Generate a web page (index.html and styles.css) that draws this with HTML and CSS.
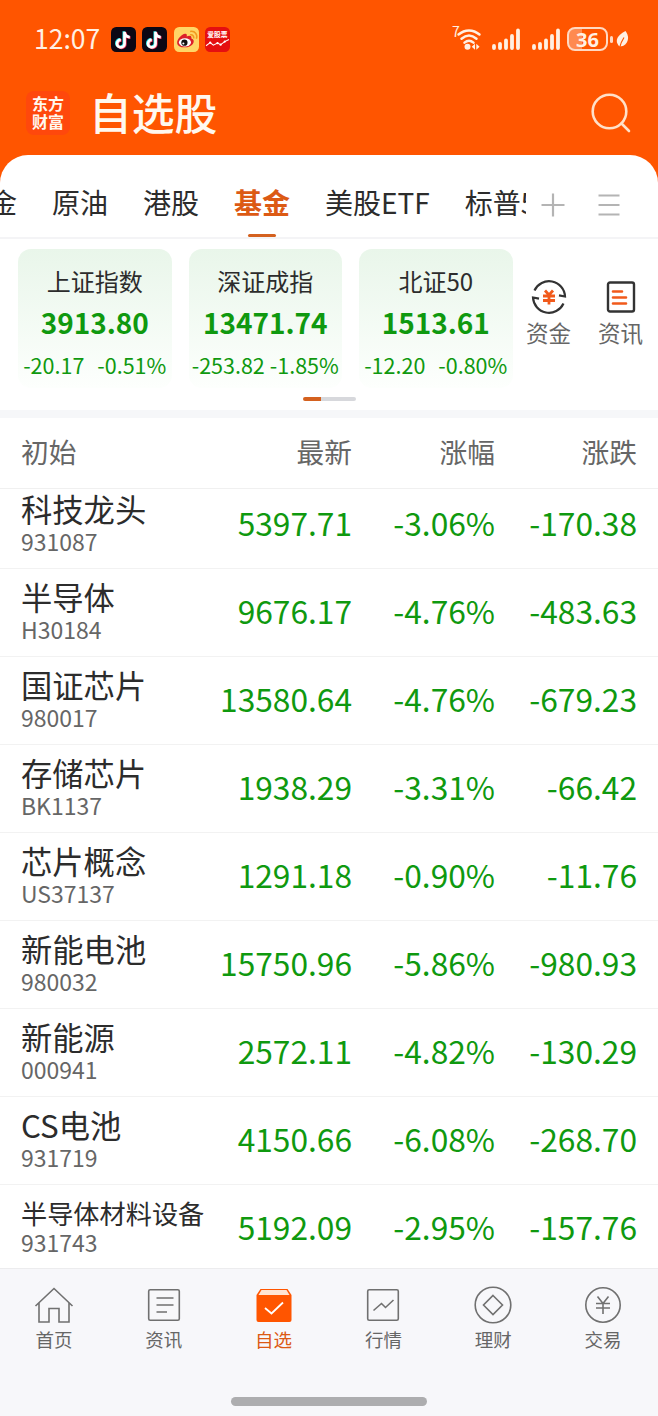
FILE: index.html
```html
<!DOCTYPE html>
<html lang="zh-CN">
<head>
  <meta charset="UTF-8">
  <title>自选股</title>
  <link rel="stylesheet" href="styles.css">
</head>
<body>
  <!-- Status Bar -->
  <div class="status-bar">
    <span class="time">12:07</span>
    <svg class="app-icon" viewBox="0 0 24 24">
      <rect width="24" height="24" rx="5" fill="#0c0714"/>
      <g fill="none" stroke-width="2.6">
        <path d="M12.3 4v11.5a3.6 3.6 0 1 1-3.6-3.6M12.3 5c.5 2.500 2.200 4 5 4.200" stroke="#25e5e8"/>
        <path d="M13.700 5v11.500a3.600 3.600 0 1 1-3.600-3.600M13.700 6c.5 2.500 2.200 4 5 4.200" stroke="#f5325c"/>
        <path d="M13 4.500V16a3.600 3.600 0 1 1-3.600-3.600M13 5.500c.5 2.500 2.200 4 5 4.200" stroke="#fff"/>
      </g>
    </svg>
    <svg class="app-icon" viewBox="0 0 24 24">
      <rect width="24" height="24" rx="5" fill="#0c0714"/>
      <g fill="none" stroke-width="2.6">
        <path d="M12.3 4v11.5a3.6 3.6 0 1 1-3.6-3.6M12.3 5c.5 2.500 2.200 4 5 4.200" stroke="#25e5e8"/>
        <path d="M13.700 5v11.500a3.600 3.600 0 1 1-3.600-3.600M13.700 6c.5 2.500 2.200 4 5 4.200" stroke="#f5325c"/>
        <path d="M13 4.500V16a3.600 3.600 0 1 1-3.600-3.600M13 5.500c.5 2.500 2.200 4 5 4.200" stroke="#fff"/>
      </g>
    </svg>
    <svg class="app-icon" viewBox="0 0 24 24">
      <rect width="24" height="24" rx="5" fill="#ffd667"/>
      <path d="M3 15c0-3.500 5-9 8-8.500 1.500.2 1.500 1.500 1.200 2.500 2.500-1 5-.8 4.500 2 2.300.7 2.600 2.300 2 4-1 3-5 4.500-8.700 4.500S3 18 3 15z" fill="#dc2029"/>
      <ellipse cx="10.500" cy="14.800" rx="5.800" ry="3.900" fill="#fff"/>
      <circle cx="10" cy="15" r="3" fill="#111"/>
      <circle cx="9" cy="15.800" r="1" fill="#fff"/>
      <path d="M15.500 7.500c2.500-.5 4 1.500 3.300 3.500M15.500 4.300c4.500-1 7.500 3 6 7" fill="none" stroke="#f29a1f" stroke-width="1.500"/>
    </svg>
    <svg class="app-icon" viewBox="0 0 24 24">
      <rect width="24" height="24" rx="5" fill="#e50f10"/>
      <text x="12" y="10" class="stock-text">爱股票</text>
      <path d="M1 18l4-3 3 2.500 4-2 3 1.500 4-3 4-2" fill="none" stroke="#fff" stroke-width="1"/>
      <g fill="#fff"><circle cx="5" cy="15" r="1.100"/><circle cx="12" cy="15.500" r="1.100"/><circle cx="15" cy="17" r="1.100"/><circle cx="19" cy="14" r="1.100"/></g>
    </svg>

    <div class="status-right">
      <svg class="wifi" width="32" height="28" viewBox="0 0 32 28">
        <text x="0" y="12" class="wifi-text">7</text>
        <g fill="none" stroke="#fff0e3" stroke-width="2.500" stroke-linecap="round">
          <path d="M6.500 9.500c6.500-5.500 14.500-5.500 21 0M9.500 13.700c5-4.300 10-4.300 15 0M12.500 17.600c3-2.500 6-2.500 9 0"/>
        </g>
        <circle cx="15.500" cy="21.800" r="3" fill="#fff0e3"/>
        <path d="M23 18.700v6l-3.300-3zM24.300 18.700v6l3.300-3z" fill="#fff0e3"/>
      </svg>
      <svg class="signal" width="28" height="22" viewBox="0 0 28 22">
        <path d="M2 20v-2M8 20v-4M14 20v-7.500M20 20V8M26 20V2.500"/>
      </svg>
      <svg class="signal" width="28" height="22" viewBox="0 0 28 22">
        <path d="M2 20v-2M8 20v-4M14 20v-7.500M20 20V8M26 20V2.500"/>
      </svg>
      <span class="battery">36</span>
      <span class="battery-tip"></span>
      <svg class="leaf" width="13" height="19" viewBox="0 0 13 19">
        <path d="M9.500 1C13.500 6 13 13 7 16L3.500 16.500C-1 12-.5 6.500 9.500 1z" fill="#fff0e3"/>
        <path d="M3.500 18C4.500 13.500 6 10.500 8 7.500" fill="none" stroke="#ff5500" stroke-width="1.200"/>
      </svg>
    </div>
  </div>

  <!-- Title -->
  <header>
    <div class="logo">东方<br>财富</div>
    <h1>自选股</h1>
    <svg class="search" width="42" height="42" viewBox="0 0 42 42">
      <circle cx="19.500" cy="19.500" r="16.800"/>
      <path d="M31.500 31.500l7.500 7.500"/>
    </svg>
  </header>

  <main>
    <!-- Group Tabs -->
    <nav class="tabs">
      <div class="tab-list">
        <a>金</a>
        <a>原油</a>
        <a>港股</a>
        <a class="active">基金</a>
        <a>美股ETF</a>
        <a>标普500</a>
      </div>
      <svg class="tab-icon" width="24" height="24" viewBox="0 0 24 24"><path d="M.5 12h23M12 .5v23"/></svg>
      <svg class="tab-icon menu" width="24" height="24" viewBox="0 0 24 24"><path d="M1.500 2.500h21M1.500 12h21M1.500 21.500h21"/></svg>
    </nav>

    <!-- Market Indexes -->
    <section class="indexes">
      <div class="index-card">
        <h3>上证指数</h3>
        <p class="value">3913.80</p>
        <p class="change"><span>-20.17</span><span>-0.51%</span></p>
      </div>
      <div class="index-card">
        <h3>深证成指</h3>
        <p class="value">13471.74</p>
        <p class="change wide"><span>-253.82</span><span>-1.85%</span></p>
      </div>
      <div class="index-card">
        <h3>北证50</h3>
        <p class="value">1513.61</p>
        <p class="change"><span>-12.20</span><span>-0.80%</span></p>
      </div>
      <div class="shortcut">
        <svg width="36" height="36" viewBox="0 0 36 36" fill="none" stroke-width="2.200">
          <path d="M3.500 11.500A16 16 0 0 1 34 17.500l-6-1.200M32.500 24.500A16 16 0 0 1 2 18.500l6 1.200" stroke="#333"/>
          <path d="M14 11.500l4 4.500 4-4.500M12 17h12M12 21.500h12M18 16v9.500" stroke="#f15a1b" stroke-width="2.800"/>
        </svg>
        <span>资金</span>
      </div>
      <div class="shortcut">
        <svg width="36" height="36" viewBox="0 0 36 36" fill="none">
          <rect x="5" y="3.500" width="26" height="29" rx="2" stroke="#333" stroke-width="2.400"/>
          <path d="M10 12.500h9M10 18.500h13M10 24.500h13" stroke="#f15a1b" stroke-width="2.600" stroke-linecap="round"/>
        </svg>
        <span>资讯</span>
      </div>
    </section>
    <div class="pager"><span></span></div>

    <!-- Watch List -->
    <div class="list-header">
      <span>初始</span><span>最新</span><span>涨幅</span><span>涨跌</span>
    </div>
    <section class="stock-list">
      <div class="stock">
        <div class="name"><h2>科技龙头</h2><p>931087</p></div>
        <span>5397.71</span><span>-3.06%</span><span>-170.38</span>
      </div>
      <div class="stock">
        <div class="name"><h2>半导体</h2><p>H30184</p></div>
        <span>9676.17</span><span>-4.76%</span><span>-483.63</span>
      </div>
      <div class="stock">
        <div class="name"><h2>国证芯片</h2><p>980017</p></div>
        <span>13580.64</span><span>-4.76%</span><span>-679.23</span>
      </div>
      <div class="stock">
        <div class="name"><h2>存储芯片</h2><p>BK1137</p></div>
        <span>1938.29</span><span>-3.31%</span><span>-66.42</span>
      </div>
      <div class="stock">
        <div class="name"><h2>芯片概念</h2><p>US37137</p></div>
        <span>1291.18</span><span>-0.90%</span><span>-11.76</span>
      </div>
      <div class="stock">
        <div class="name"><h2>新能电池</h2><p>980032</p></div>
        <span>15750.96</span><span>-5.86%</span><span>-980.93</span>
      </div>
      <div class="stock">
        <div class="name"><h2>新能源</h2><p>000941</p></div>
        <span>2572.11</span><span>-4.82%</span><span>-130.29</span>
      </div>
      <div class="stock">
        <div class="name"><h2>CS电池</h2><p>931719</p></div>
        <span>4150.66</span><span>-6.08%</span><span>-268.70</span>
      </div>
      <div class="stock">
        <div class="name long"><h2>半导体材料设备</h2><p>931743</p></div>
        <span>5192.09</span><span>-2.95%</span><span>-157.76</span>
      </div>
    </section>
  </main>

  <!-- Bottom Navigation -->
  <footer>
    <nav class="bottom-nav">
      <a>
        <svg width="40" height="40" viewBox="0 0 40 40"><path d="M1.500 21L20 3.500 38.500 21M5 18v19h10V23.500h10V37h10V18"/></svg>
        首页
      </a>
      <a>
        <svg width="40" height="40" viewBox="0 0 40 40"><rect x="4.700" y="4.700" width="30.600" height="30.600" rx="1.500"/><path d="M12.500 13h17M12.500 20h17M12.500 27h10.500"/></svg>
        资讯
      </a>
      <a class="active">
        <svg width="40" height="40" viewBox="0 0 40 40">
          <path d="M6.500 4h27l4 6v25a2 2 0 0 1-2 2h-31a2 2 0 0 1-2-2V10z" fill="#ff5500" stroke="none"/>
          <path d="M7.500 5h25l3 5h-31z" fill="#ffe4d3" stroke="none"/>
          <path d="M11 23l6.500 5.500L29 17.500" stroke="#fff" stroke-width="1.800"/>
        </svg>
        自选
      </a>
      <a>
        <svg width="40" height="40" viewBox="0 0 40 40"><rect x="4.700" y="4.700" width="30.600" height="30.600" rx="1.500"/><path d="M10.500 25.500l8-7 4 4 8-7.500"/></svg>
        行情
      </a>
      <a>
        <svg width="40" height="40" viewBox="0 0 40 40"><circle cx="20" cy="20" r="17.800"/><path d="M20 10.500l9.500 9.500-9.500 9.500-9.500-9.500z"/></svg>
        理财
      </a>
      <a>
        <svg width="40" height="40" viewBox="0 0 40 40"><circle cx="20" cy="20" r="17.200"/><path d="M14.500 11.500l5.500 7 5.500-7M13 18.500h14M13 23h14M20 18.500v10.500"/></svg>
        交易
      </a>
    </nav>
    <div class="home-bar"></div>
  </footer>
</body>
</html>
```

FILE: styles.css
```css
* {
  box-sizing: border-box;
}

body {
  font-family: "Noto Sans CJK SC", sans-serif;
  margin: 0;
  width: 658px;
  height: 1416px;
  overflow: hidden;
  background-color: #ff5500;
  color: #2c2c2c;
}

h1, h2, h3, p {
  margin: 0;
  font-weight: normal;
}

svg {
  display: block;
  flex-shrink: 0;
}

/* Status bar */
.status-bar {
  display: flex;
  align-items: center;
  height: 78px;
  padding: 0 29px 0 34px;
  color: #fff0e3;
}

.time {
  width: 76.500px;
  font-size: 26.500px;
  line-height: 30px;
  margin-top: -3px;
}

.app-icon {
  width: 25px;
  height: 25px;
  margin-right: 6.500px;
}

.stock-text {
  font-size: 6.500px;
  font-weight: bold;
  fill: #fff;
  text-anchor: middle;
}

.status-right {
  display: flex;
  align-items: center;
  margin-left: auto;
}

.wifi {
  overflow: visible;
}

.wifi-text {
  font-size: 14px;
  fill: #fff0e3;
}

.signal {
  margin-left: 8px;
  fill: none;
  stroke: #fff0e3;
  stroke-width: 3.800;
  stroke-linecap: round;
}

.signal + .signal {
  margin-left: 12px;
}

.battery {
  width: 41px;
  height: 24px;
  margin-left: 7px;
  border: 2px solid #ffd9c2;
  border-radius: 8px;
  background: linear-gradient(to right, #ff8a50 36%, transparent 36%);
  font-family: "Noto Sans", sans-serif;
  font-size: 20px;
  font-weight: bold;
  line-height: 21px;
  text-align: center;
}

.battery-tip {
  width: 3px;
  height: 7px;
  margin-left: 2px;
  border-radius: 2px;
  background-color: #ffd9c2;
}

.leaf {
  margin-left: 3px;
}

/* Title */
header {
  display: flex;
  align-items: center;
  height: 77px;
  padding: 0 26px 8px 26px;
  color: #fff8ef;
}

.logo {
  width: 44px;
  height: 44px;
  padding-top: 3px;
  border-radius: 8px;
  background-color: #ff480c;
  font-size: 16px;
  font-weight: bold;
  line-height: 18px;
  text-align: center;
}

header h1 {
  margin: -3px 0 0 19px;
  font-size: 42.800px;
  font-weight: 500;
  line-height: 50px;
}

.search {
  margin: 0 0 0 auto;
  fill: none;
  stroke: #ffe0c8;
  stroke-width: 2.600;
  stroke-linecap: round;
}

main {
  height: 1113px;
  border-radius: 28px 28px 0 0;
  background-color: #fff;
  overflow: hidden;
}

/* Group tabs */
.tabs {
  display: flex;
  align-items: center;
  height: 84px;
  padding-top: 15px;
  border-bottom: 2px solid #f4f4f6;
}

.tab-list {
  display: flex;
  gap: 35px;
  width: 526px;
  height: 67px;
  overflow: hidden;
  white-space: nowrap;
  font-size: 28px;
  line-height: 64px;
}

.tab-list a:first-child {
  margin-left: -11px;
}

.tab-list .active {
  display: flex;
  flex-direction: column;
  align-items: center;
  color: #dc5a14;
  font-weight: bold;
}

.tab-list .active::after {
  content: "";
  width: 28px;
  height: 3px;
  border-radius: 2px;
  background-color: #d4611f;
}

.tab-icon {
  margin: 2px 0 0 15px;
  fill: none;
  stroke: #b4b4b4;
  stroke-width: 2.200;
}

.tab-icon.menu {
  margin-left: 32px;
}

/* Market indexes */
.indexes {
  display: flex;
  height: 149px;
  padding: 10px 0 0 18px;
}

.index-card {
  width: 153.500px;
  height: 139px;
  margin-right: 17px;
  padding-top: 16px;
  border-radius: 13px;
  background: linear-gradient(#e9f6ea, #fdfffd);
  text-align: center;
}

.index-card h3 {
  font-size: 24px;
  line-height: 32px;
}

.index-card .value {
  margin-top: 9px;
  color: #0f990f;
  font-size: 28px;
  font-weight: bold;
  line-height: 32px;
}

.index-card .change {
  display: flex;
  justify-content: center;
  gap: 13px;
  margin-top: 13px;
  color: #0f990f;
  font-size: 21.500px;
  line-height: 28px;
  white-space: nowrap;
}

.index-card .change.wide {
  gap: 5px;
}

.shortcut {
  display: flex;
  flex-direction: column;
  align-items: center;
  width: 72px;
  padding-top: 30px;
  color: #666;
  font-size: 22.500px;
  line-height: 35px;
}

.index-card + .shortcut {
  margin-left: -17px;
}

.pager {
  display: flex;
  justify-content: center;
  height: 30px;
  padding-top: 9px;
  border-bottom: 8px solid #f6f7f9;
}

.pager span {
  width: 53px;
  height: 4px;
  border-radius: 2px;
  background: linear-gradient(to right, #d4611f 34%, #d7d8dc 34%);
}

/* Watch list */
.list-header, .stock {
  display: grid;
  grid-template-columns: 190px 141px 143px 142px;
  align-items: center;
  padding: 0 21px;
  text-align: right;
  white-space: nowrap;
}

.list-header {
  height: 71px;
  padding-bottom: 4px;
  border-bottom: 1px solid #f0f0f0;
  color: #666;
  font-size: 27.700px;
  line-height: 32px;
}

.list-header span:first-child, .name {
  text-align: left;
}

.stock-list {
  height: 779px;
  overflow: hidden;
}

.stock {
  height: 88px;
  border-bottom: 1px solid #f2f2f2;
  color: #0f990f;
  font-size: 31.700px;
  line-height: 36px;
}

.stock > span {
  margin-top: -5px;
}

.stock:first-child {
  height: 80px;
  padding-bottom: 8px;
}

.name {
  margin-top: -4px;
}

.name h2 {
  color: #2c2c2c;
  font-size: 31.300px;
  line-height: 36px;
}

.name p {
  color: #666;
  font-size: 23px;
  line-height: 28px;
}

.name.long h2 {
  font-size: 26.200px;
  line-height: 30px;
}

/* Bottom navigation */
footer {
  height: 148px;
  background-color: #f7f7fa;
  border-top: 1px solid #ececee;
}

.bottom-nav {
  display: flex;
  height: 128px;
  margin-left: -1px;
  padding-top: 16px;
}

.bottom-nav a {
  display: flex;
  flex: 1;
  flex-direction: column;
  align-items: center;
  color: #666;
  font-size: 18.500px;
  line-height: 28px;
}

.bottom-nav svg {
  fill: none;
  stroke: #707070;
  stroke-width: 1.600;
}

.bottom-nav .active {
  color: #dc5a14;
}

.home-bar {
  width: 196px;
  height: 9px;
  margin: 0 auto;
  border-radius: 5px;
  background-color: #adadaf;
}
```
